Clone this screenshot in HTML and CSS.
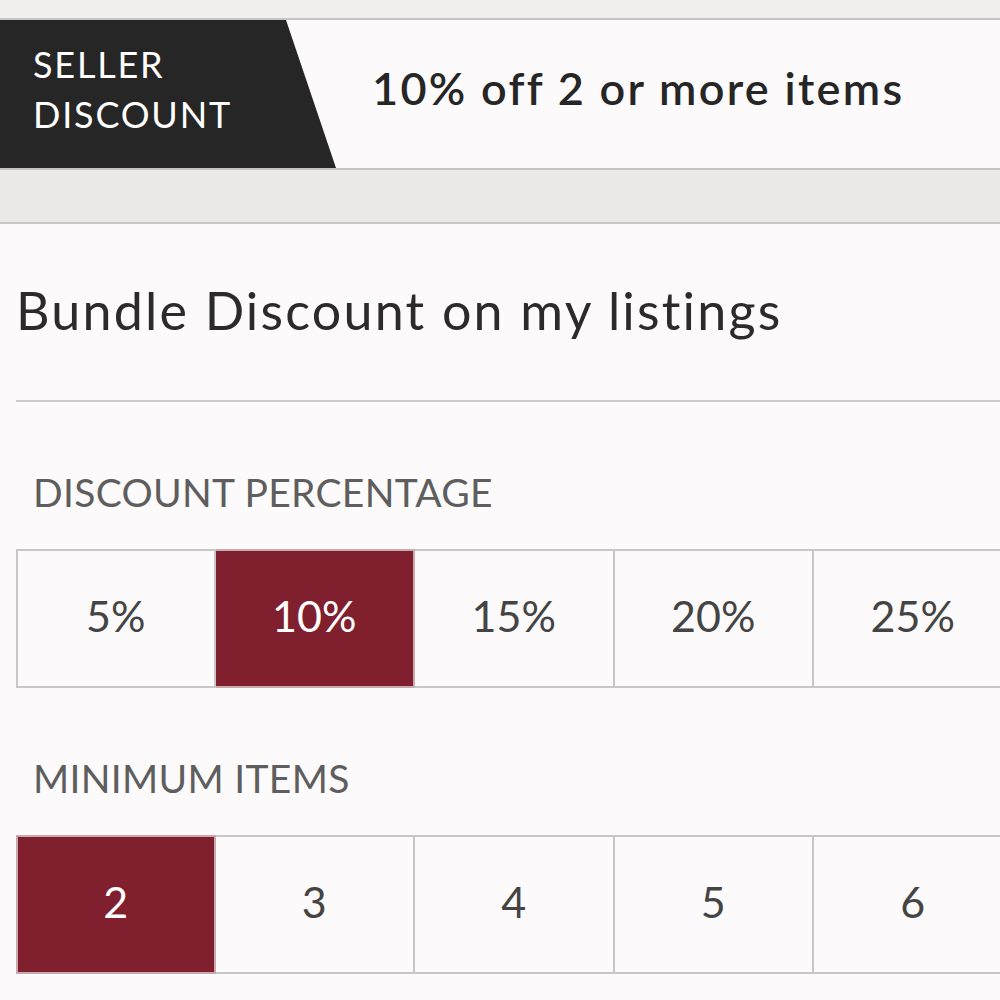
FILE: index.html
```html
<!DOCTYPE html>
<html>
<head>
<meta charset="utf-8">
<link rel="stylesheet" href="styles.css">
</head>
<body>
<div class="page">
  <div class="topstrip"></div>
  <div class="banner">
    <div class="tag"><span>SELLER<br>DISCOUNT</span></div>
    <div class="offer">10% off 2 or more items</div>
  </div>
  <div class="band"></div>
  <div class="content">
    <h1 class="title">Bundle Discount on my listings</h1>
    <div class="divider"></div>
    <div class="label">DISCOUNT PERCENTAGE</div>
    <div class="options">
      <div class="opt">5%</div>
      <div class="opt sel">10%</div>
      <div class="opt">15%</div>
      <div class="opt">20%</div>
      <div class="opt">25%</div>
    </div>
    <div class="label label2">MINIMUM ITEMS</div>
    <div class="options">
      <div class="opt sel">2</div>
      <div class="opt">3</div>
      <div class="opt">4</div>
      <div class="opt">5</div>
      <div class="opt">6</div>
    </div>
  </div>
</div>
</body>
</html>
```

FILE: styles.css
```css
html, body {
  margin: 0;
  padding: 0;
  background: #fcfafa;
  overflow: hidden;
}
.page {
  width: 1000px;
  height: 1000px;
  overflow: hidden;
  font-family: "Lato", "Liberation Sans", sans-serif;
  color: #333;
}
.topstrip {
  height: 18px;
  background: #f1f0ee;
  border-bottom: 2px solid #c6c4c2;
}
.banner {
  height: 148px;
  display: flex;
  align-items: stretch;
  background: #fcfafa;
  border-bottom: 2px solid #c6c4c2;
}
.tag {
  width: 336px;
  flex: none;
  background: #262626;
  clip-path: polygon(0 0, 286px 0, 100% 100%, 0 100%);
  color: #fff;
  display: flex;
  align-items: center;
  padding-left: 33px;
  padding-bottom: 10px;
  box-sizing: border-box;
  font-size: 36px;
  line-height: 50px;
  letter-spacing: 1.8px;
}
.offer {
  display: flex;
  align-items: center;
  padding-left: 36px;
  font-size: 45px;
  font-weight: 600;
  color: #262626;
  padding-bottom: 12px;
  letter-spacing: 2.3px;
}
.band {
  height: 52px;
  background: #ebe9e6;
  border-bottom: 2px solid #c9c7c5;
}
.content {
  padding: 0 0 0 16px;
}
.title {
  margin: 0;
  padding-top: 56px;
  height: 116px;
  box-sizing: border-box;
  font-weight: 400;
  font-size: 52px;
  line-height: 60px;
  color: #2b2b2b;
  padding-left: 0;
  letter-spacing: 2.2px;
}
.divider {
  height: 2px;
  background: #cfcdcd;
  margin-top: 60px;
}
.label {
  margin-top: 68px;
  padding-left: 17px;
  font-size: 39px;
  line-height: 44px;
  color: #5e5e5e;
  letter-spacing: 0.3px;
}
.label2 {
  margin-top: 68px;
}
.options {
  display: grid;
  grid-template-columns: repeat(5, 199.5px);
  margin-top: 35px;
  width: 1000px;
}
.opt {
  height: 139px;
  box-sizing: border-box;
  border: 2px solid #c7c7c7;
  border-left: none;
  display: flex;
  align-items: center;
  justify-content: center;
  padding-bottom: 6px;
  font-size: 43px;
  color: #444;
  background: #fcfafa;
}
.opt:first-child {
  border-left: 2px solid #c7c7c7;
}
.opt.sel {
  background: #80202f;
  color: #fff;
  border-color: #c9a9ad;
}
```
